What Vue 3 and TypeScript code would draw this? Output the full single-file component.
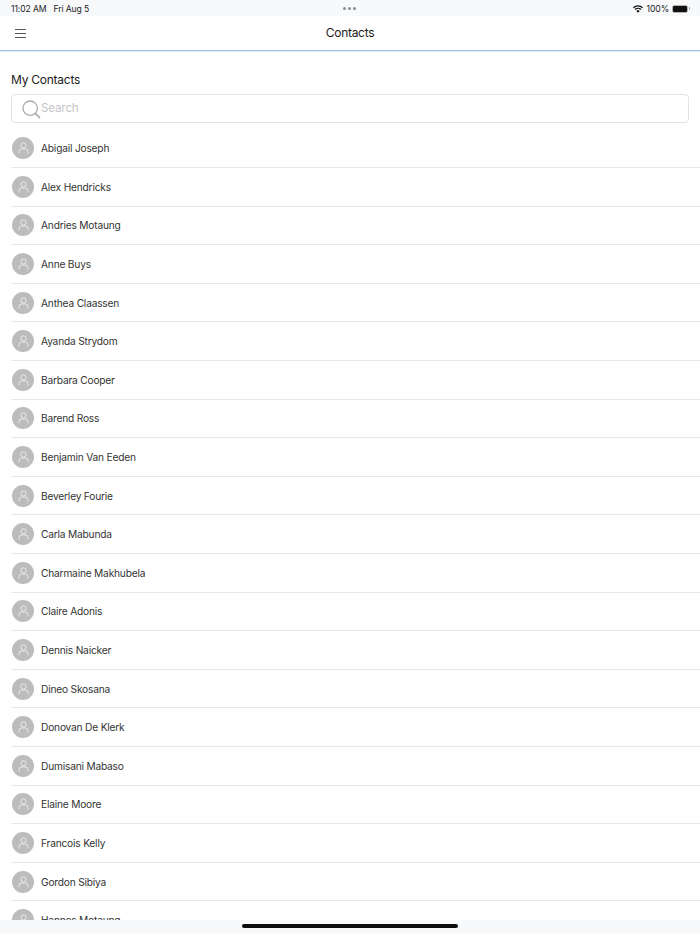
<template>
  <div class="screen">
    <div class="status-bar">
      <div class="status-left">
        <span>11:02 AM</span>
        <span>Fri Aug 5</span>
      </div>
      <div class="dots"><i></i><i></i><i></i></div>
      <div class="status-right">
        <svg width="10" height="8" viewBox="0 0 22 16" class="wifi">
          <path d="M11 16 7.4 12.2a5 5 0 0 1 7.2 0Z" fill="#111" />
          <path d="M5.6 10.3 3.5 8.1a10.8 10.8 0 0 1 15 0l-2.1 2.2a7.8 7.8 0 0 0-10.8 0Z" fill="#111" />
          <path d="M1.9 6.4 0 4.4a16 16 0 0 1 22 0l-1.9 2a13.2 13.2 0 0 0-18.2 0Z" fill="#111" />
        </svg>
        <span>100%</span>
        <div class="battery"><div class="battery-fill"></div></div>
        <div class="battery-tip"></div>
      </div>
    </div>

    <header class="nav">
      <button class="menu" aria-label="Menu">
        <span></span><span></span><span></span>
      </button>
      <div class="nav-title">Contacts</div>
    </header>

    <main class="content">
      <h2>My Contacts</h2>
      <div class="search">
        <svg width="20" height="20" viewBox="0 0 20 20" class="search-icon">
          <circle cx="9.2" cy="9.2" r="7.2" fill="none" stroke="#a9a9a9" stroke-width="1.3" />
          <path d="M14.4 14.4 18.6 18.6" stroke="#a9a9a9" stroke-width="1.5" stroke-linecap="round" />
        </svg>
        <span class="placeholder">Search</span>
      </div>

      <ul class="list">
        <li v-for="name in contacts" :key="name" class="row">
          <div class="avatar">
            <svg width="11" height="12" viewBox="0 0 11 12">
              <circle cx="5.5" cy="3.4" r="2.6" fill="none" stroke="#eee" stroke-width="0.9" />
              <path d="M1 11V9.8a2.8 2.8 0 0 1 2.8-2.8h3.4a2.8 2.8 0 0 1 2.8 2.8V11" fill="none" stroke="#eee" stroke-width="0.9" stroke-linecap="round" />
            </svg>
          </div>
          <span class="name">{{ name }}</span>
        </li>
      </ul>
    </main>

    <div class="home-area"><div class="home-bar"></div></div>
  </div>
</template>

<script setup lang="ts">
const contacts: string[] = [
  'Abigail Joseph',
  'Alex Hendricks',
  'Andries Motaung',
  'Anne Buys',
  'Anthea Claassen',
  'Ayanda Strydom',
  'Barbara Cooper',
  'Barend Ross',
  'Benjamin Van Eeden',
  'Beverley Fourie',
  'Carla Mabunda',
  'Charmaine Makhubela',
  'Claire Adonis',
  'Dennis Naicker',
  'Dineo Skosana',
  'Donovan De Klerk',
  'Dumisani Mabaso',
  'Elaine Moore',
  'Francois Kelly',
  'Gordon Sibiya',
  'Hannes Motaung'
];
</script>

<style>
html, body { margin: 0; background: #fff; overflow: hidden; }
</style>

<style scoped>
.screen {
  width: 700px;
  height: 934px;
  display: flex;
  flex-direction: column;
  overflow: hidden;
  font-family: Inter, "Liberation Sans", sans-serif;
  color: #222;
  background: #fff;
}
.status-bar {
  height: 16px;
  flex: none;
  box-sizing: border-box;
  background: #f8f9fb;
  display: flex;
  align-items: center;
  justify-content: space-between;
  padding: 1px 10px 0 11px;
  font-size: 8.6px;
  letter-spacing: -0.1px;
  color: #222;
  position: relative;
}
.status-left { display: flex; gap: 7px; }
.dots {
  position: absolute;
  left: 343px;
  top: 7px;
  display: flex;
  gap: 2px;
}
.dots i { width: 3px; height: 3px; border-radius: 50%; background: #8d8d8f; }
.status-right { display: flex; align-items: center; gap: 2px; }
.wifi { margin-right: 2px; }
.battery {
  width: 16px;
  height: 8px;
  margin-left: 1px;
  border: 1px solid #b5b5b5;
  border-radius: 2px;
  box-sizing: border-box;
}
.battery-fill { width: 100%; height: 100%; background: #111; border-radius: 1px; }
.battery-tip { width: 1px; height: 3px; background: #aaa; margin-left: -1px; }
.nav {
  height: 35px;
  flex: none;
  box-sizing: border-box;
  padding-bottom: 2px;
  display: flex;
  align-items: center;
  justify-content: center;
  position: relative;
  border-bottom: 1px solid #a3c4e8;
  box-shadow: 0 1px 0 #dbe8f5;
  background: #fff;
}
.menu {
  position: absolute;
  left: 15px;
  top: 13px;
  width: 12px;
  padding: 0;
  border: 0;
  background: none;
  display: flex;
  flex-direction: column;
  gap: 3px;
}
.menu span { display: block; height: 1px; width: 11px; background: #555; }
.nav-title { font-size: 12px; letter-spacing: -0.3px; color: #1a1a1a; }
.content {
  flex: 1;
  min-height: 0;
  padding: 21px 0 0 11px;
  overflow: hidden;
}
h2 {
  margin: 0 0 6px;
  font-size: 12px;
  font-weight: 400;
  line-height: 16px;
  letter-spacing: -0.25px;
  color: #222;
}
.search {
  height: 28.5px;
  margin-right: 11px;
  box-sizing: border-box;
  border: 1px solid #dfe2e8;
  border-radius: 4px;
  display: flex;
  align-items: center;
  padding-left: 9px;
}
.search-icon { flex: none; margin-top: 2px; }
.placeholder { font-size: 11.5px; letter-spacing: -0.1px; color: #c4c4c6; }
.list { list-style: none; margin: 7px 0 0; padding: 0; }
.row {
  height: 38.6px;
  box-sizing: border-box;
  display: flex;
  align-items: center;
  border-bottom: 1px solid #e9e9e9;
}
.avatar {
  width: 22px;
  height: 22px;
  margin-left: 1px;
  border-radius: 50%;
  background: #bcbcbc;
  display: flex;
  align-items: center;
  justify-content: center;
  flex: none;
}
.name { margin-left: 7px; font-size: 10.2px; letter-spacing: -0.2px; color: #333; }
.home-area {
  height: 14px;
  flex: none;
  background: #f8f9fb;
  position: relative;
  z-index: 1;
}
.home-bar {
  position: absolute;
  left: 242px;
  top: 4px;
  width: 216px;
  height: 4px;
  border-radius: 2px;
  background: #0c0c0c;
}
</style>
